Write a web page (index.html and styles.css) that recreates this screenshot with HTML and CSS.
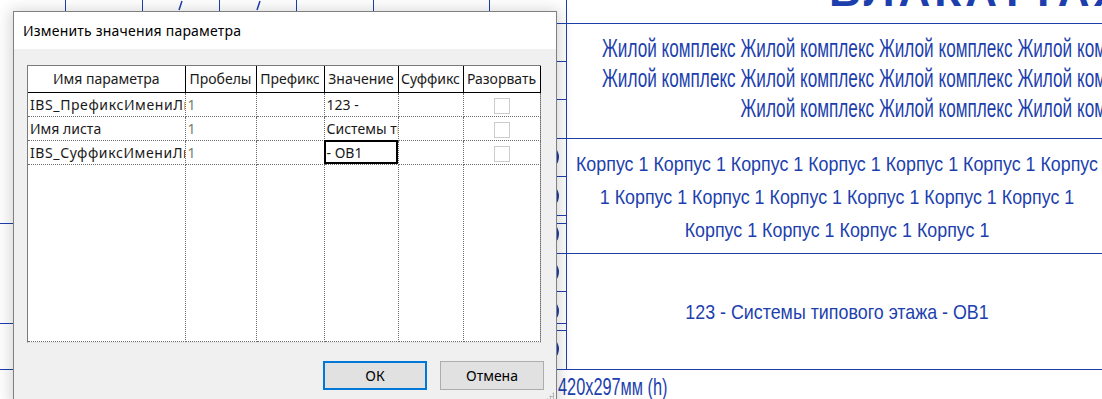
FILE: index.html
```html
<!DOCTYPE html>
<html lang="ru">
<head>
    <meta charset="UTF-8">
    <title>Изменить значения параметра</title>
    <link rel="stylesheet" href="styles.css">
</head>
<body>
    <div class="sheet">
        <svg class="sheet-lines" width="1102" height="399" viewBox="0 0 1102 399">
            <g stroke="#1d3fae" stroke-width="1" fill="none">
                <line x1="65.5" y1="0" x2="65.5" y2="60"/>
                <line x1="142.5" y1="0" x2="142.5" y2="60"/>
                <line x1="219.5" y1="0" x2="219.5" y2="60"/>
                <line x1="296.5" y1="0" x2="296.5" y2="60"/>
                <line x1="373.5" y1="0" x2="373.5" y2="60"/>
                <line x1="489.5" y1="0" x2="489.5" y2="60"/>
                <line x1="182" y1="1" x2="179" y2="10" stroke-width="1.5"/>
                <line x1="260" y1="1" x2="257" y2="10" stroke-width="1.5"/>
                <line x1="0" y1="223.5" x2="566" y2="223.5"/>
                <line x1="0" y1="323.5" x2="566" y2="323.5"/>
                <line x1="0" y1="369.5" x2="566" y2="369.5"/>
                <line x1="500" y1="23.5" x2="566" y2="23.5"/>
                <line x1="500" y1="61.5" x2="566" y2="61.5"/>
                <line x1="500" y1="99.5" x2="566" y2="99.5"/>
                <line x1="500" y1="138.5" x2="566" y2="138.5"/>
                <line x1="500" y1="176.5" x2="566" y2="176.5"/>
                <line x1="500" y1="215.5" x2="566" y2="215.5"/>
                <line x1="500" y1="253.5" x2="566" y2="253.5"/>
                <line x1="500" y1="291.5" x2="566" y2="291.5"/>
                <line x1="500" y1="330.5" x2="566" y2="330.5"/>
            </g>
            <g stroke="#1d3fae" stroke-width="2" fill="none">
                <circle cx="547" cy="157" r="11"/>
                <circle cx="547" cy="196" r="11"/>
                <circle cx="547" cy="234" r="11"/>
                <circle cx="547" cy="272" r="11"/>
                <circle cx="547" cy="311" r="11"/>
                <circle cx="547" cy="349" r="11"/>
            </g>
        </svg>

        <div class="stamp">
            <div class="stamp-cell stamp-top">
                <span class="stamp-heading">ВЛАКАТТАХ</span>
            </div>
            <div class="stamp-cell stamp-complex">
                <div class="narrow narrow-complex">
                    <div>Жилой комплекс Жилой комплекс Жилой комплекс Жилой комплекс</div>
                    <div>Жилой комплекс Жилой комплекс Жилой комплекс Жилой комплекс</div>
                    <div>Жилой комплекс Жилой комплекс Жилой комплекс</div>
                </div>
            </div>
            <div class="stamp-cell stamp-block">
                <div class="narrow narrow-center">
                    <div>Корпус 1 Корпус 1 Корпус 1 Корпус 1 Корпус 1 Корпус 1 Корпус</div>
                    <div>1 Корпус 1 Корпус 1 Корпус 1 Корпус 1 Корпус 1 Корпус 1</div>
                    <div>Корпус 1 Корпус 1 Корпус 1 Корпус 1</div>
                </div>
            </div>
            <div class="stamp-cell stamp-name">
                <div class="narrow narrow-center">123 - Системы типового этажа - ОВ1</div>
            </div>
        </div>
        <div class="sheet-format">
            <span class="narrow narrow-left">420x297мм (h)</span>
        </div>
    </div>

    <div class="dialog">
        <div class="dialog-title">Изменить значения параметра</div>
        <div class="dialog-body">
            <div class="grid">
                <table>
                    <colgroup>
                        <col style="width: 157px">
                        <col style="width: 71px">
                        <col style="width: 68px">
                        <col style="width: 74px">
                        <col style="width: 65px">
                        <col style="width: 77px">
                    </colgroup>
                    <thead>
                        <tr>
                            <th>Имя параметра</th>
                            <th>Пробелы</th>
                            <th>Префикс</th>
                            <th>Значение</th>
                            <th>Суффикс</th>
                            <th>Разорвать</th>
                        </tr>
                    </thead>
                    <tbody>
                        <tr>
                            <td class="code">IBS_ПрефиксИмениЛиста</td>
                            <td class="num">1</td>
                            <td></td>
                            <td>123 -</td>
                            <td></td>
                            <td class="check"><span class="check-box"></span></td>
                        </tr>
                        <tr>
                            <td>Имя листа</td>
                            <td class="num">1</td>
                            <td></td>
                            <td>Системы типового этажа</td>
                            <td></td>
                            <td class="check"><span class="check-box"></span></td>
                        </tr>
                        <tr>
                            <td class="code">IBS_СуффиксИмениЛиста</td>
                            <td class="num">1</td>
                            <td></td>
                            <td class="editing">- ОВ1</td>
                            <td></td>
                            <td class="check"><span class="check-box"></span></td>
                        </tr>
                        <tr class="filler">
                            <td></td><td></td><td></td><td></td><td></td><td></td>
                        </tr>
                    </tbody>
                </table>
            </div>
            <div class="dialog-buttons">
                <button class="btn btn-default">ОК</button>
                <button class="btn">Отмена</button>
            </div>
        </div>
        <span class="grip"></span>
    </div>
</body>
</html>
```

FILE: styles.css
```css
* {
    box-sizing: border-box;
}
html, body {
    margin: 0;
}
body {
    position: relative;
    width: 1102px;
    height: 399px;
    overflow: hidden;
    background: #fff;
    font-family: "Noto Sans", "Open Sans", sans-serif;
    font-size: 14px;
    color: #000;
}

/* drawing behind the dialog */
.sheet {
    position: absolute;
    inset: 0;
    color: #1d3fae;
    font-family: "Liberation Sans", Arial, sans-serif;
}
.sheet-lines {
    position: absolute;
    left: 0;
    top: 0;
}
.stamp {
    position: relative;
    margin-left: 566px;
    width: 540px;
    border-left: 1px solid #1d3fae;
    display: flex;
    flex-direction: column;
}
.stamp-cell {
    border-bottom: 1px solid #1d3fae;
    overflow: hidden;
}
.stamp-top {
    height: 24px;
    padding-left: 262px;
}
.stamp-heading {
    display: block;
    margin-top: -31px;
    font-size: 44px;
    line-height: 44px;
    font-weight: bold;
    white-space: nowrap;
    letter-spacing: 4px;
}
.stamp-complex {
    height: 115px;
    padding: 9px 0 0 35px;
}
.stamp-block {
    height: 115px;
    padding-top: 8px;
}
.stamp-name {
    height: 116px;
    display: flex;
    align-items: center;
}
.narrow {
    white-space: nowrap;
}
.narrow-complex {
    display: inline-flex;
    flex-direction: column;
    align-items: flex-end;
    font-size: 26px;
    line-height: 30px;
    transform: scaleX(.66);
    transform-origin: 0 0;
}
.narrow-center {
    flex-shrink: 0;
    width: 900px;
    margin-left: -180px;
    font-size: 21px;
    line-height: 33px;
    text-align: center;
    transform: scaleX(.85);
}
.sheet-format {
    margin-left: 558px;
    padding-top: 4px;
}
.narrow-left {
    display: inline-block;
    font-size: 24px;
    line-height: 26px;
    transform: scaleX(.68);
    transform-origin: 0 0;
}

/* dialog */
.dialog {
    position: absolute;
    left: 13px;
    top: 11px;
    width: 544px;
    height: 391px;
    border: 1px solid #808080;
    background: #f0f0f0;
    box-shadow: 0 2px 14px 3px rgba(0, 0, 0, .16);
    display: flex;
    flex-direction: column;
}
.dialog-title {
    height: 37px;
    padding-left: 9px;
    background: #fff;
    display: flex;
    align-items: center;
    letter-spacing: .2px;
}
.dialog-body {
    padding: 16px 12px 0 13px;
}
.grid {
    width: 514px;
    height: 278px;
    background: #fff;
    border: 1px solid;
    border-color: #7a7a7a #a0a0a0 #e6e6e6 #7a7a7a;
}
.grid table {
    width: 512px;
    height: 100%;
    table-layout: fixed;
    border-collapse: collapse;
}
.grid th, .grid td {
    padding: 0 2px;
    white-space: nowrap;
    overflow: hidden;
    text-overflow: clip;
    font-weight: normal;
    color: #1a1a1a;
}
.grid th {
    height: 26px;
    text-align: center;
    border-right: 1px solid #000;
    border-bottom: 1px solid #000;
}
.grid td {
    height: 24px;
    border-right: 1px dotted #6e6e6e;
    border-bottom: 1px dotted #6e6e6e;
}
.grid .filler td {
    height: auto;
}
.grid .code {
    letter-spacing: .6px;
}
.grid .num {
    color: #6f806f;
}
.grid .check {
    text-align: center;
}
.check-box {
    display: inline-block;
    width: 16px;
    height: 16px;
    margin-top: 3px;
    border: 1px solid #cccccc;
    background: #fff;
    vertical-align: top;
}
.grid td.editing {
    outline: 2px solid #000;
    outline-offset: -2px;
}
.dialog-buttons {
    display: flex;
    justify-content: flex-end;
    gap: 13px;
    margin-top: 18px;
}
.btn {
    width: 104px;
    height: 29px;
    background: #e1e1e1;
    border: 1px solid #adadad;
    font-family: inherit;
    font-size: 14px;
    color: #000;
    padding: 0;
}
.btn-default {
    border: 2px solid #0078d7;
}
.grip {
    position: absolute;
    right: 2px;
    bottom: 1px;
    width: 8px;
    height: 8px;
    background:
        radial-gradient(circle, #b5b5b5 1px, transparent 1.2px) 0 0 / 3px 3px;
    clip-path: polygon(100% 0, 100% 100%, 0 100%);
}
```
